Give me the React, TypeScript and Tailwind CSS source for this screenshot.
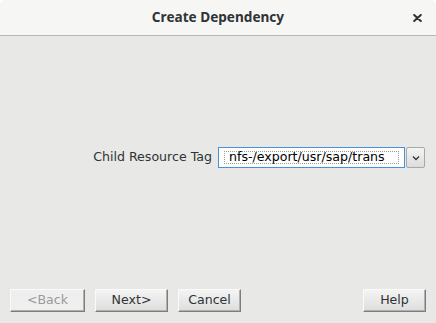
import React from "react";

const font = { fontFamily: '"DejaVu Sans", sans-serif' };

function Btn({ children, w, disabled }: { children: React.ReactNode; w: string; disabled?: boolean }) {
  return (
    <div
      className={`${w} h-[23px] flex items-center justify-center text-[12.6px] border border-t-[#fafafa] border-l-[#fafafa] border-r-[#7d7d7d] border-b-[#7d7d7d] shadow-[inset_-1px_-1px_0_#b0b0b0] ${
        disabled ? "text-[#9a9a9a] bg-[#efefef]" : "text-[#2e3436] bg-gradient-to-b from-[#f4f4f4] to-[#dedede]"
      }`}
    >
      {children}
    </div>
  );
}

export default function App() {
  return (
    <div className="w-[436px] h-[323px] bg-white" style={font}>
      <div className="w-full h-full flex flex-col bg-[#e8e8e7] rounded-t-[6px] overflow-hidden">
        <div className="h-[36px] shrink-0 bg-[#f6f6f5] border-b border-[#b8b8b4] flex items-center justify-center relative">
          <span className="text-[13.6px] font-bold text-[#2e3436]" style={{ fontFamily: '"Noto Sans", sans-serif' }}>
            Create Dependency
          </span>
          <span className="absolute left-[413px] top-[14px] text-[#2e3436] flex">
            <svg width="9" height="8" viewBox="0 0 9 8">
              <path d="M1.2 1 L7.8 7 M7.8 1 L1.2 7" stroke="#2e3436" strokeWidth="2" strokeLinecap="round" />
            </svg>
          </span>
        </div>
        <div className="flex-1 flex flex-col">
          <div className="flex items-center justify-end pr-[11px] mt-[111px] gap-[6px]">
            <span className="text-[12.6px] text-[#2e3436]">Child Resource Tag</span>
            <div className="flex items-center gap-[1px]">
              <div className="w-[187px] h-[21px] bg-white border border-[#4a90d9] flex items-center px-[5px]">
                <div className="w-[175px] h-[13px] border border-dotted border-[#9a9a9a] flex items-center pl-[4px]">
                  <span className="text-[12.6px] leading-none text-[#000] whitespace-nowrap">nfs-/export/usr/sap/trans</span>
                </div>
              </div>
              <div className="w-[19px] h-[21px] flex items-center justify-center border border-[#a8a8a8] bg-gradient-to-b from-[#f4f4f4] to-[#dcdcdc] rounded-[2px]">
                <svg width="8" height="6" viewBox="0 0 8 6">
                  <path d="M1 1.5 L4 4.5 L7 1.5" stroke="#2e3436" strokeWidth="1.3" fill="none" />
                </svg>
              </div>
            </div>
          </div>
          <div className="flex-1" />
          <div className="flex items-center px-[10px] pb-[11px] gap-[10px]">
            <Btn w="w-[75px]" disabled>
              &lt;Back
            </Btn>
            <Btn w="w-[73px]">Next&gt;</Btn>
            <Btn w="w-[63px]">Cancel</Btn>
            <div className="flex-1" />
            <Btn w="w-[63px]">Help</Btn>
          </div>
        </div>
      </div>
    </div>
  );
}
